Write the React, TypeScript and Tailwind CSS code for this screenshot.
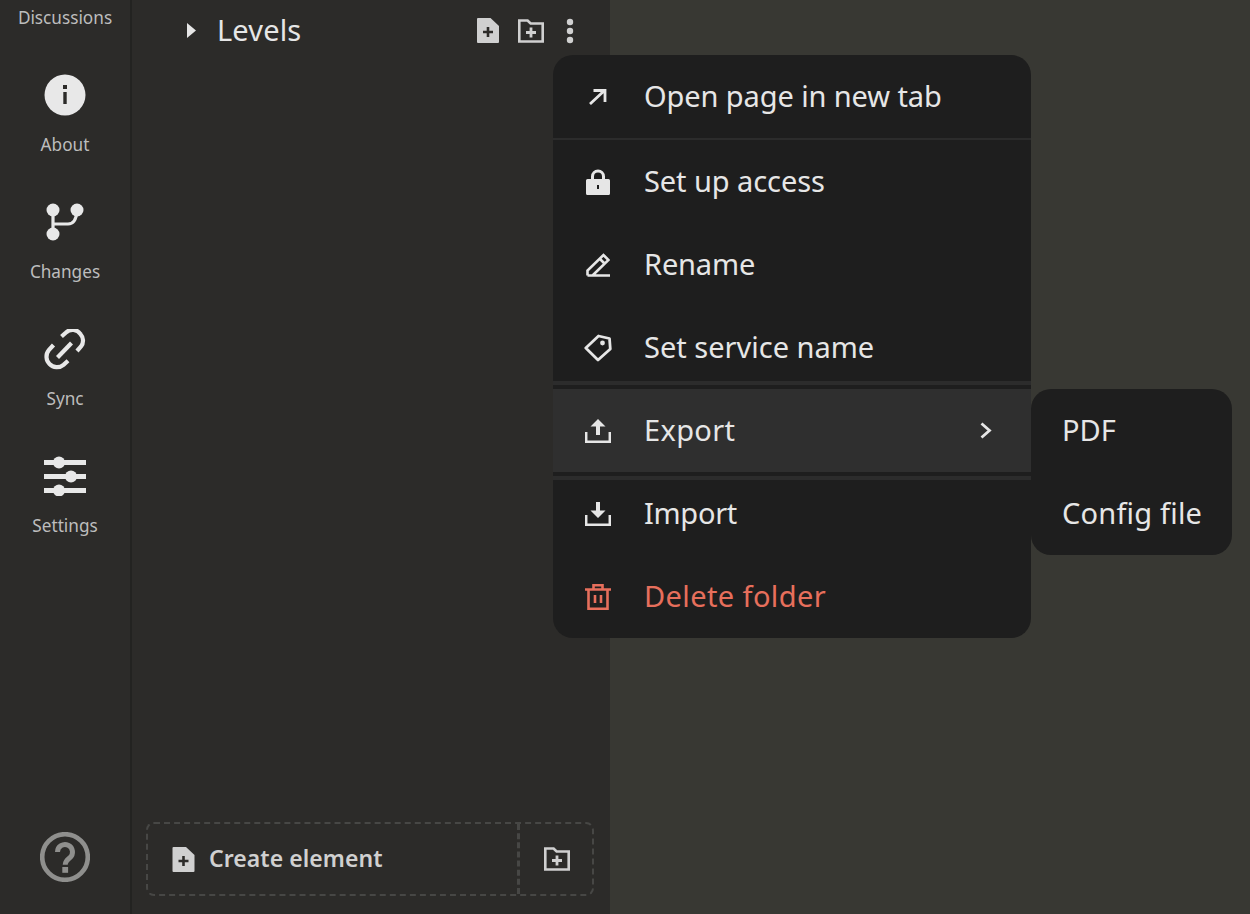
import React from "react";

type IconProps = { className?: string };

const FileAdd = ({ className }: IconProps) => (
  <svg viewBox="0 0 22 25" className={className} fill="currentColor">
    <path fillRule="evenodd" d="M1 0h12.500L22 8v16a1 1 0 0 1-1 1H1a1 1 0 0 1-1-1V1a1 1 0 0 1 1-1ZM9.700 9v3.700H6v2.600h3.700V19h2.600v-3.700H16v-2.600h-3.700V9Z" />
  </svg>
);
const FolderAdd = ({ className }: IconProps) => (
  <svg viewBox="0 0 26 24" className={className} fill="none" stroke="currentColor" strokeWidth="2.600">
    <path d="M1.300 1.500h8.300l3 3h12.100v18H1.300Z" />
    <path d="M13 8.500v10M8 13.500h10" strokeWidth="2.800" />
  </svg>
);
const Info = ({ className }: IconProps) => (
  <svg viewBox="0 0 42 42" className={className}>
    <circle cx="21" cy="21" r="20.500" fill="currentColor" />
    <rect x="19" y="11" width="4" height="4" fill="#2c2b29" />
    <rect x="19.300" y="18" width="3.400" height="12" fill="#2c2b29" />
  </svg>
);
const Branch = ({ className }: IconProps) => (
  <svg viewBox="0 0 38 38" className={className} fill="currentColor">
    <circle cx="7" cy="7" r="6.500" />
    <circle cx="31" cy="7" r="6.500" />
    <circle cx="7" cy="31" r="6.500" />
    <path d="M7 7v24M7 21h15q8 0 9-13" fill="none" stroke="currentColor" strokeWidth="3.200" />
  </svg>
);
const LinkIcon = ({ className }: IconProps) => (
  <svg viewBox="0 0 42 42" className={className} fill="none" stroke="currentColor" strokeWidth="4.200">
    <path d="M17.500 7.500 22 3.500a9.500 9.500 0 0 1 14.500 1.600 9.700 9.700 0 0 1 .5 12.400l-4 4.500" />
    <path d="M9.500 16 4.800 21.200a10.300 10.300 0 0 0 .7 13.800 10.300 10.300 0 0 0 14 .8l4.500-4" />
    <path d="M13.500 28.500 27.500 14" />
  </svg>
);
const Sliders = ({ className }: IconProps) => (
  <svg viewBox="0 0 42 40" className={className} fill="currentColor">
    <rect x="0" y="4" width="42" height="5" />
    <rect x="0" y="18" width="42" height="5" />
    <rect x="0" y="32" width="42" height="5" />
    <circle cx="15" cy="6.500" r="6" />
    <circle cx="27" cy="20.500" r="6" />
    <circle cx="15" cy="34.500" r="6" />
  </svg>
);
const Help = ({ className }: IconProps) => (
  <svg viewBox="0 0 50 50" className={className} fill="none">
    <circle cx="25" cy="25" r="22.800" stroke="currentColor" strokeWidth="4.600" />
    <path d="M17.500 20a7.500 7.500 0 1 1 12.300 5.800c-2.800 2.200-4.600 3.600-4.600 7" stroke="currentColor" strokeWidth="5" />
    <rect x="22.300" y="35" width="5.800" height="5.800" fill="currentColor" />
  </svg>
);
const Lock = ({ className }: IconProps) => (
  <svg viewBox="0 0 24 26" className={className} fill="currentColor">
    <path fillRule="evenodd" d="M5 10V7.500a7 7 0 0 1 14 0V10h3.500a1.500 1.500 0 0 1 1.500 1.500v13a1.500 1.500 0 0 1-1.500 1.500h-21A1.500 1.500 0 0 1 0 24.500v-13A1.500 1.500 0 0 1 1.500 10ZM8 10h8V7.500a4 4 0 0 0-8 0ZM11 16v4h2v-4Z" />
  </svg>
);

const ArrowNE = ({ className }: IconProps) => (
  <svg viewBox="0 0 18 16" className={className} fill="none" stroke="currentColor" strokeWidth="2.800">
    <path d="M1 15 15.500 1.500M4.500 1.500h11.500v11.500" />
  </svg>
);
const Pencil = ({ className }: IconProps) => (
  <svg viewBox="0 0 24 24" className={className} fill="none" stroke="currentColor" strokeWidth="2.600">
    <path d="M1.500 22.500h22.500M1.500 22.500v-5L17.500 2l5 5-16 15.500M14 6l5 5" />
  </svg>
);
const Tag = ({ className }: IconProps) => (
  <svg viewBox="0 0 28 28" className={className} fill="none" stroke="currentColor" strokeWidth="2.800">
    <path d="M1.800 14 14.500 2l11 2.500 .8 10.500L14 26Z" strokeLinejoin="round" />
    <circle cx="18.500" cy="9" r="2.400" fill="currentColor" stroke="none" />
  </svg>
);
const Upload = ({ className }: IconProps) => (
  <svg viewBox="0 0 26 24" className={className} fill="currentColor">
    <path d="M13 0 20.500 7.500H15V16h-4V7.500H5.500Z" />
    <path d="M1.200 13v9.800h23.600V13" fill="none" stroke="currentColor" strokeWidth="2.500" />
  </svg>
);
const Download = ({ className }: IconProps) => (
  <svg viewBox="0 0 26 24" className={className} fill="currentColor">
    <path d="M11 0h4v8.500h5.500L13 16 5.500 8.500H11Z" />
    <path d="M1.200 13v9.800h23.600V13" fill="none" stroke="currentColor" strokeWidth="2.500" />
  </svg>
);
const Trash = ({ className }: IconProps) => (
  <svg viewBox="0 0 26 26" className={className} fill="none" stroke="currentColor" strokeWidth="2.600">
    <path d="M0 5.500h26M8.500 5V1.300h9V5M3.500 5.500v19.200h19V5.500M10 11v8M16 11v8" />
  </svg>
);
const Chevron = ({ className }: IconProps) => (
  <svg viewBox="0 0 12 17" className={className} fill="none" stroke="currentColor" strokeWidth="2.800">
    <path d="M1.500 1.500 9.500 8.500 1.500 15.500" />
  </svg>
);

const NavItem = ({ icon, label }: { icon: React.ReactNode; label: string }) => (
  <div className="flex h-[127px] flex-col items-center">
    <div className="flex h-[42px] items-center justify-center text-[#e8e8e8]">{icon}</div>
    <span className="mt-[17px] text-[17.2px] leading-6 text-[#bdbdbd]">{label}</span>
  </div>
);

const MenuItem = ({
  icon,
  label,
  className = "text-[#e6e6e6]",
  labelClassName = "",
  right,
}: {
  icon?: React.ReactNode;
  label: string;
  className?: string;
  labelClassName?: string;
  right?: React.ReactNode;
}) => (
  <div className={`flex h-[83px] items-center ${className}`}>
    <div className="flex w-[89px] justify-center">{icon}</div>
    <span className={`mb-[2px] ml-[2px] text-[29px] leading-none ${labelClassName}`}>{label}</span>
    {right}
  </div>
);

export default function App() {
  return (
    <div className="relative flex h-[914px] w-[1250px] overflow-hidden bg-[#383833] font-['Noto_Sans',sans-serif]">
      <aside className="flex h-full w-[132px] shrink-0 flex-col items-center border-r-2 border-[#232321] bg-[#2c2b29]">
        <span className="mt-[6px] text-[17.2px] leading-6 text-[#bdbdbd]">Discussions</span>
        <div className="mt-[44px] flex w-full flex-col">
          <NavItem icon={<Info className="h-[42px] w-[42px]" />} label="About" />
          <NavItem icon={<Branch className="h-[38px] w-[38px]" />} label="Changes" />
          <NavItem icon={<LinkIcon className="mt-[2px] h-[42px] w-[42px]" />} label="Sync" />
          <NavItem icon={<Sliders className="h-[40px] w-[42px]" />} label="Settings" />
        </div>
        <Help className="mt-auto mb-[32px] h-[50px] w-[50px] text-[#8f8f8d]" />
      </aside>

      <section className="flex h-full w-[478px] shrink-0 flex-col bg-[#2c2b29]">
        <div className="flex h-[61px] items-center text-[#e6e6e6]">
          <svg viewBox="0 0 9 15" className="ml-[55px] h-[15px] w-[9px]" fill="currentColor">
            <path d="M0 0 9 7.500 0 15Z" />
          </svg>
          <span className="mb-[2px] ml-[21px] text-[29px] leading-none tracking-[0.15px]">Levels</span>
          <div className="ml-auto flex items-center pr-[36px] text-[#d0d0d0]">
            <FileAdd className="h-[25px] w-[22px]" />
            <FolderAdd className="ml-[19px] h-[24px] w-[26px]" />
            <svg viewBox="0 0 8 26" className="ml-[22px] h-[26px] w-[8px]" fill="currentColor">
              <circle cx="4" cy="4" r="3.200" />
              <circle cx="4" cy="13" r="3.200" />
              <circle cx="4" cy="22" r="3.200" />
            </svg>
          </div>
        </div>
        <div className="mt-auto mb-[18px] ml-[14px] flex h-[74px] w-[448px] rounded-lg border-2 border-dashed border-[#474745] text-[#d0d0d0]">
          <div className="flex flex-1 items-center border-r-[3px] border-dashed border-[#474745] pl-[24px]">
            <FileAdd className="h-[25px] w-[23px]" />
            <span className="mb-[2px] ml-[14px] text-[23px] font-semibold leading-none tracking-[0.05px]">Create element</span>
          </div>
          <div className="flex w-[72px] items-center justify-center pl-[1px]">
            <FolderAdd className="h-[24px] w-[26px]" />
          </div>
        </div>
      </section>

      <main className="flex-1 bg-[#383833]" />

      <div className="absolute left-[553px] top-[55px] w-[478px] overflow-hidden rounded-[20px] bg-[#1e1e1e]">
        <MenuItem icon={<ArrowNE className="h-[16px] w-[18px]" />} label="Open page in new tab" labelClassName="tracking-[-0.1px]" />
        <div className="h-[2px] bg-[#2c2c2c]" />
        <MenuItem icon={<Lock className="h-[26px] w-[24px]" />} label="Set up access" labelClassName="tracking-[-0.08px]" />
        <MenuItem icon={<Pencil className="h-[24px] w-[24px]" />} label="Rename" labelClassName="tracking-[-0.15px]" />
        <MenuItem icon={<Tag className="h-[28px] w-[28px]" />} label="Set service name" />
        <div className="relative">
          <div className="absolute -top-[8px] h-[4px] w-full bg-[#2c2c2c]" />
          <MenuItem
            icon={<Upload className="h-[24px] w-[26px]" />}
            label="Export"
            labelClassName="tracking-[0.35px]"
            className="bg-[#2f2f2f] text-[#e6e6e6]"
            right={<Chevron className="ml-auto mr-[39px] h-[17px] w-[12px]" />}
          />
          <div className="absolute -bottom-[8px] h-[4px] w-full bg-[#2c2c2c]" />
        </div>
        <MenuItem icon={<Download className="h-[24px] w-[26px]" />} label="Import" labelClassName="tracking-[-0.3px]" />
        <MenuItem icon={<Trash className="h-[26px] w-[26px]" />} label="Delete folder" labelClassName="tracking-[0.4px]" className="text-[#e76f5c]" />
      </div>

      <div className="absolute left-[1031px] top-[389px] w-[201px] rounded-[20px] bg-[#1e1e1e] text-[#e6e6e6]">
        <div className="flex h-[83px] items-center pl-[31px]"><span className="mb-[2px] text-[29px] leading-none">PDF</span></div>
        <div className="flex h-[83px] items-center pl-[31px]"><span className="mb-[2px] text-[29px] leading-none tracking-[0.2px]">Config file</span></div>
      </div>
    </div>
  );
}
